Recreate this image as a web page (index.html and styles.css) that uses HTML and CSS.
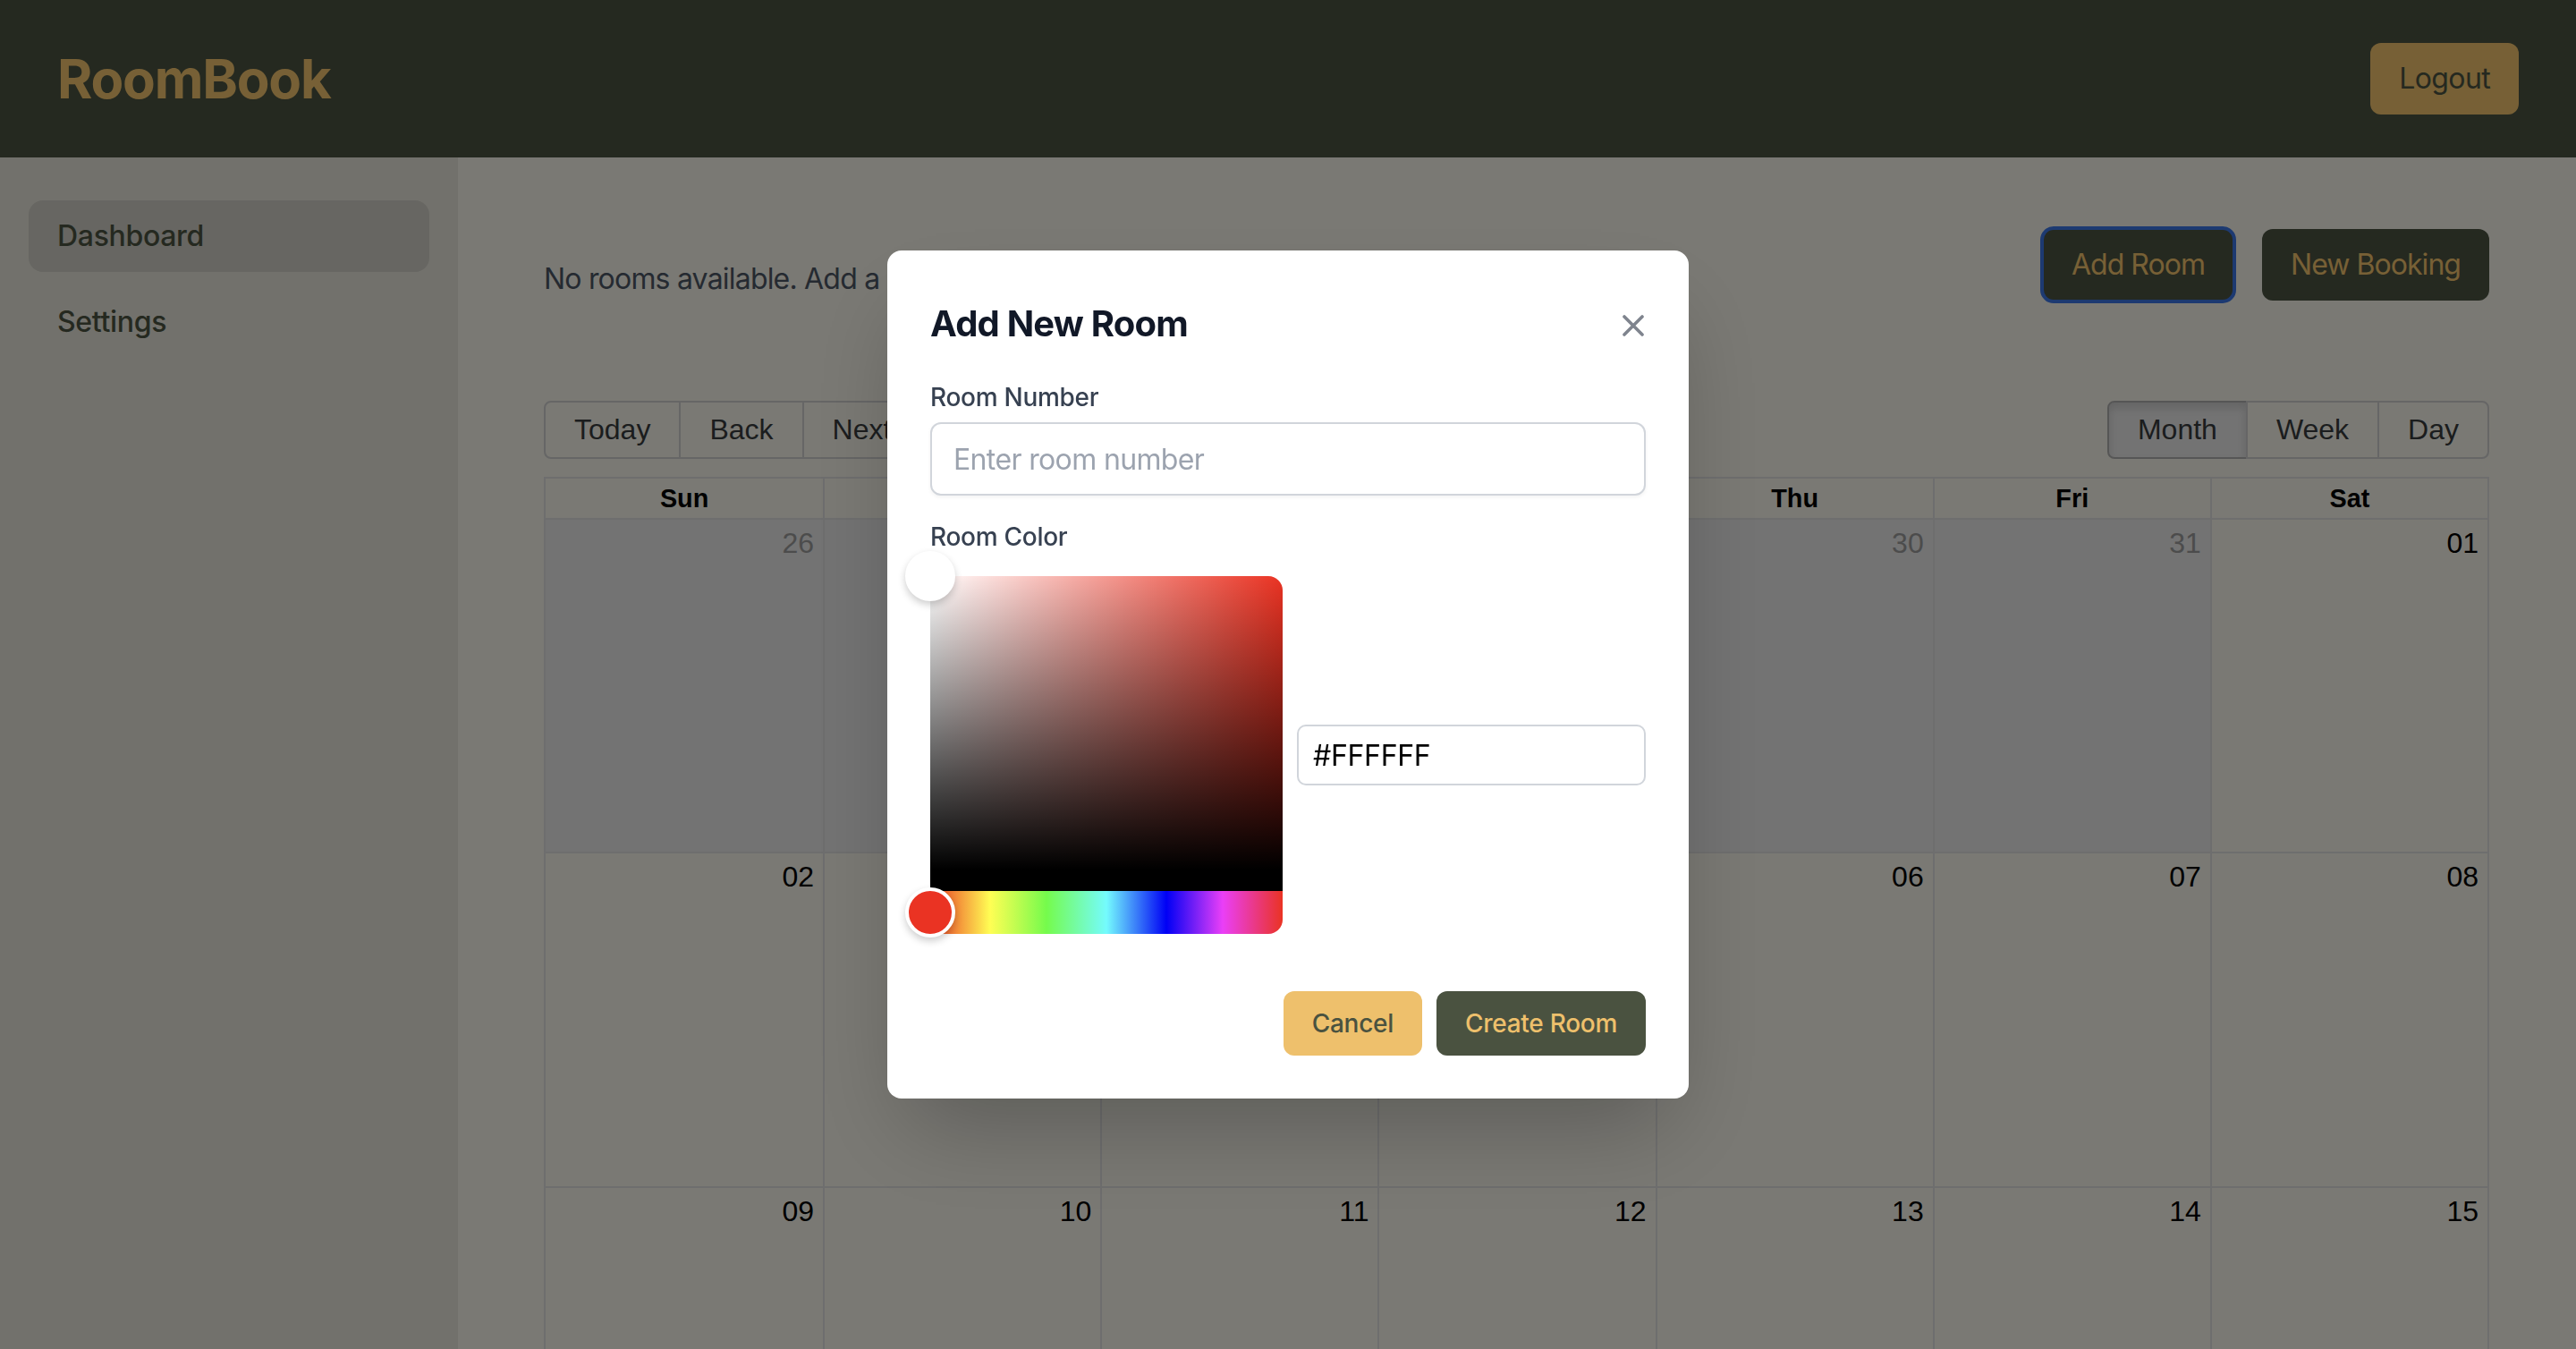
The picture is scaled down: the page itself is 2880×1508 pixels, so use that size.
FILE: index.html
```html
<!DOCTYPE html>
<html lang="en">
<head>
<meta charset="utf-8">
<title>RoomBook</title>
<link rel="stylesheet" href="styles.css">
</head>
<body>
<div class="app">
  <header class="topbar">
    <h1 class="logo">RoomBook</h1>
    <button class="btn-logout">Logout</button>
  </header>
  <div class="layout">
    <aside class="sidebar">
      <nav class="nav">
        <a class="nav-item active">Dashboard</a>
        <a class="nav-item">Settings</a>
      </nav>
    </aside>
    <main class="main">
      <div class="main-top">
        <p class="empty">No rooms available. Add a room to get started.</p>
        <div class="actions">
          <button class="btn-dark focused">Add Room</button>
          <button class="btn-dark">New Booking</button>
        </div>
      </div>
      <div class="calendar">
        <div class="toolbar">
          <span class="btn-group">
            <button class="tb-btn">Today</button><button class="tb-btn">Back</button><button class="tb-btn">Next</button>
          </span>
          <span class="toolbar-label">February 2025</span>
          <span class="btn-group">
            <button class="tb-btn active">Month</button><button class="tb-btn">Week</button><button class="tb-btn">Day</button>
          </span>
        </div>
        <div class="month-view">
          <div class="month-header">
            <div class="cal-header">Sun</div><div class="cal-header">Mon</div><div class="cal-header">Tue</div><div class="cal-header">Wed</div><div class="cal-header">Thu</div><div class="cal-header">Fri</div><div class="cal-header">Sat</div>
          </div>
          <div class="month-row">
            <div class="day off"><span class="date">26</span></div>
            <div class="day off"><span class="date">27</span></div>
            <div class="day off"><span class="date">28</span></div>
            <div class="day off"><span class="date">29</span></div>
            <div class="day off"><span class="date">30</span></div>
            <div class="day off"><span class="date">31</span></div>
            <div class="day"><span class="date">01</span></div>
          </div>
          <div class="month-row">
            <div class="day"><span class="date">02</span></div>
            <div class="day"><span class="date">03</span></div>
            <div class="day"><span class="date">04</span></div>
            <div class="day"><span class="date">05</span></div>
            <div class="day"><span class="date">06</span></div>
            <div class="day"><span class="date">07</span></div>
            <div class="day"><span class="date">08</span></div>
          </div>
          <div class="month-row">
            <div class="day"><span class="date">09</span></div>
            <div class="day"><span class="date">10</span></div>
            <div class="day"><span class="date">11</span></div>
            <div class="day"><span class="date">12</span></div>
            <div class="day"><span class="date">13</span></div>
            <div class="day"><span class="date">14</span></div>
            <div class="day"><span class="date">15</span></div>
          </div>
          <div class="month-row">
            <div class="day"><span class="date">16</span></div>
            <div class="day"><span class="date">17</span></div>
            <div class="day"><span class="date">18</span></div>
            <div class="day"><span class="date">19</span></div>
            <div class="day"><span class="date">20</span></div>
            <div class="day"><span class="date">21</span></div>
            <div class="day"><span class="date">22</span></div>
          </div>
          <div class="month-row">
            <div class="day"><span class="date">23</span></div>
            <div class="day"><span class="date">24</span></div>
            <div class="day"><span class="date">25</span></div>
            <div class="day"><span class="date">26</span></div>
            <div class="day"><span class="date">27</span></div>
            <div class="day"><span class="date">28</span></div>
            <div class="day off"><span class="date">01</span></div>
          </div>
        </div>
      </div>
    </main>
  </div>

  <div class="overlay">
    <div class="modal">
      <div class="modal-head">
        <h2 class="modal-title">Add New Room</h2>
        <button class="close-btn" aria-label="Close">
          <svg width="24" height="24" viewBox="0 0 24 24"><path d="M2 2 L22 22 M22 2 L2 22" stroke="currentColor" stroke-width="3.6" stroke-linecap="round" fill="none"/></svg>
        </button>
      </div>
      <div class="field">
        <label class="field-label">Room Number</label>
        <input class="text-input" type="text" placeholder="Enter room number">
      </div>
      <div class="field field-color">
        <label class="field-label label-color">Room Color</label>
        <div class="picker-row">
          <div class="picker">
            <div class="saturation">
              <div class="pointer pointer-sat"></div>
            </div>
            <div class="hue">
              <div class="pointer pointer-hue"></div>
            </div>
          </div>
          <input class="hex-input" type="text" value="#FFFFFF">
        </div>
      </div>
      <div class="modal-actions">
        <button class="btn-cancel">Cancel</button>
        <button class="btn-create">Create Room</button>
      </div>
    </div>
  </div>
</div>
</body>
</html>
```

FILE: styles.css
```css
* { box-sizing: border-box; }

html, body {
  margin: 0;
  padding: 0;
  height: 100%;
  overflow: hidden;
}

body {
  font-family: Inter, "Noto Sans", sans-serif;
  line-height: 1.5;
  color: #000;
}

button, input {
  font-family: inherit;
  margin: 0;
}

.app {
  height: 100vh;
  display: flex;
  flex-direction: column;
  overflow: hidden;
}

/* ---------- top bar ---------- */
.topbar {
  height: 176px;
  flex: none;
  background: #4a5240;
  display: flex;
  align-items: center;
  justify-content: space-between;
  padding: 0 64px;
}

.logo {
  margin: 0;
  font-size: 60px;
  line-height: 72px;
  font-weight: 700;
  color: #eec06c;
  letter-spacing: -0.02em;
}

.btn-logout {
  background: #eec06c;
  color: #4a5240;
  border: none;
  border-radius: 12px;
  padding: 16px 32px;
  font-size: 32px;
  line-height: 48px;
  letter-spacing: -0.02em;
}

/* ---------- layout ---------- */
.layout {
  flex: 1;
  display: flex;
  min-height: 0;
}

.sidebar {
  width: 512px;
  flex: none;
  background: #e4e2d8;
  padding: 48px 32px;
}

.nav {
  display: flex;
  flex-direction: column;
  gap: 16px;
}

.nav-item {
  display: block;
  padding: 16px 32px;
  border-radius: 16px;
  font-size: 32px;
  line-height: 48px;
  font-weight: 500;
  color: #4a5240;
  letter-spacing: -0.01em;
}

.nav-item.active {
  background: #cecdc4;
}

.main {
  flex: 1;
  background: #f4f2e8;
  padding: 80px 97px 0 96px;
  min-width: 0;
}

.main-top {
  display: flex;
  justify-content: space-between;
  align-items: flex-end;
}

.empty {
  margin: 0;
  font-size: 32px;
  line-height: 48px;
  color: #4b5563;
  letter-spacing: -0.025em;
  white-space: nowrap;
}

.actions {
  display: flex;
  gap: 32px;
}

.btn-dark {
  background: #4a5240;
  color: #eec06c;
  border: none;
  border-radius: 12px;
  padding: 16px 32px;
  font-size: 32px;
  line-height: 48px;
  letter-spacing: -0.03em;
}

.btn-dark.focused {
  outline: 4px solid #3a74e2;
  outline-offset: -1px;
}

/* ---------- calendar ---------- */
.calendar {
  margin-top: 112px;
  font-family: "Liberation Sans", Arial, sans-serif;
  font-size: 32px;
  color: #373a3c;
}

.toolbar {
  display: flex;
  align-items: center;
  justify-content: center;
  margin-bottom: 20px;
}

.btn-group {
  display: inline-flex;
  white-space: nowrap;
}

.tb-btn {
  color: #373a3c;
  background: none;
  border: 2px solid #ccc;
  padding: 12px 32px 12px;
  font-size: 32px;
  line-height: normal;
  font-family: "Liberation Sans", Arial, sans-serif;
  border-radius: 0;
  margin-left: -2px;
}

.tb-btn:first-child {
  margin-left: 0;
  border-radius: 8px 0 0 8px;
}

.tb-btn:last-child {
  border-radius: 0 8px 8px 0;
}

.tb-btn.active {
  background: #e6e6e6;
  border-color: #adadad;
  box-shadow: inset 0 6px 10px rgba(0, 0, 0, 0.125);
}

.toolbar-label {
  flex-grow: 1;
  padding: 0 20px;
  text-align: center;
}

.month-view {
  border: 2px solid #ddd;
  border-bottom: none;
}

.month-header {
  display: grid;
  grid-template-columns: repeat(7, 1fr);
  border-bottom: 2px solid #ddd;
}

.cal-header {
  text-align: center;
  font-weight: 700;
  font-size: 28.8px;
  line-height: 43px;
  padding: 1px 6px 0;
  color: #000;
}

.cal-header + .cal-header {
  border-left: 2px solid #ddd;
}

.month-row {
  display: grid;
  grid-template-columns: repeat(7, 1fr);
  height: 371px;
}

.month-row + .month-row {
  height: 374px;
  border-top: 2px solid #ddd;
}

.day {
  text-align: right;
  padding-right: 10px;
  color: #000;
  line-height: 52px;
}

.day + .day {
  border-left: 2px solid #ddd;
}

.day.off {
  background: #e6e6e6;
  color: #999;
}

/* ---------- modal ---------- */
.overlay {
  position: fixed;
  inset: 0;
  background: rgba(0, 0, 0, 0.5);
  display: flex;
  align-items: center;
  justify-content: center;
}

.modal {
  width: 896px;
  background: #fff;
  border-radius: 16px;
  padding: 48px;
  box-shadow: 0 50px 100px -24px rgba(0, 0, 0, 0.25);
}

.modal-head {
  display: flex;
  align-items: center;
  justify-content: space-between;
  margin-bottom: 28px;
}

.modal-title {
  margin: 0;
  font-size: 40px;
  line-height: 68px;
  font-weight: 700;
  color: #111827;
  letter-spacing: -0.02em;
}

.close-btn {
  background: none;
  border: none;
  padding: 0;
  width: 26px;
  height: 26px;
  display: flex;
  align-items: center;
  justify-content: center;
  color: #7f848e;
  margin-right: 1px;
  margin-top: 3px;
}

.field-label {
  display: block;
  font-size: 28px;
  line-height: 40px;
  font-weight: 500;
  color: #374151;
  margin-bottom: 8px;
  letter-spacing: -0.01em;
}

.field-color {
  margin-top: 26px;
}

.label-color {
  margin-bottom: 24px;
}

.text-input {
  display: block;
  width: 100%;
  height: 82px;
  padding: 0 24px;
  border: 2px solid #d1d5db;
  border-radius: 12px;
  font-size: 32px;
  color: #111827;
  box-shadow: 0 2px 4px rgba(0, 0, 0, 0.05);
  outline: none;
  letter-spacing: -0.02em;
}

.text-input::placeholder {
  color: #9ca3af;
}

.picker-row {
  display: flex;
  align-items: center;
  gap: 16px;
}

.picker {
  flex: 0 0 394px;
  height: 400px;
  display: flex;
  flex-direction: column;
}

.saturation {
  position: relative;
  flex-grow: 1;
  border-bottom: 24px solid #000;
  border-radius: 16px 16px 0 0;
  background-color: #ea3323;
  background-image:
    linear-gradient(to top, #000, rgba(0, 0, 0, 0)),
    linear-gradient(to right, #fff, rgba(255, 255, 255, 0));
}

.hue {
  position: relative;
  height: 48px;
  border-radius: 0 0 16px 16px;
  background: linear-gradient(to right, #ea3323 0%, #fffe54 17%, #75fb4c 33%, #74fbfd 50%, #0000f5 67%, #ea3ff7 83%, #ea3323 100%);
}

.pointer {
  position: absolute;
  width: 56px;
  height: 56px;
  border-radius: 50%;
  border: 4px solid #fff;
  box-shadow: 0 4px 8px rgba(0, 0, 0, 0.2);
  transform: translate(-50%, -50%);
  z-index: 2;
}

.pointer-sat {
  top: 0;
  left: 0;
  background: #fff;
}

.pointer-hue {
  top: 50%;
  left: 0;
  background: #ea3323;
}

.hex-input {
  flex: 1 1 auto;
  width: 10px;
  min-width: 0;
  height: 68px;
  padding: 0 16px;
  border: 2px solid #d1d5db;
  border-radius: 10px;
  font-size: 32px;
  color: #000;
  outline: none;
  letter-spacing: -0.01em;
}

.modal-actions {
  margin-top: 64px;
  display: flex;
  justify-content: flex-end;
  gap: 16px;
}

.btn-cancel,
.btn-create {
  border: none;
  border-radius: 12px;
  padding: 16px 32px;
  font-size: 28px;
  line-height: 40px;
  font-weight: 500;
  letter-spacing: -0.01em;
}

.btn-cancel {
  background: #eec06c;
  color: #4a5240;
}

.btn-create {
  background: #4a5240;
  color: #eec06c;
}
```
